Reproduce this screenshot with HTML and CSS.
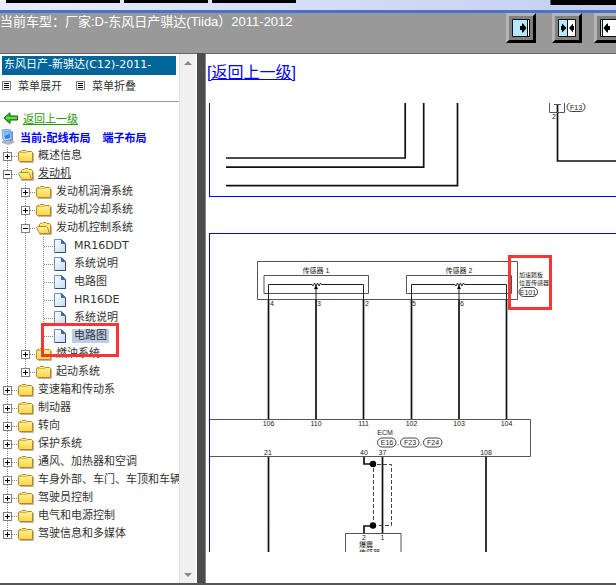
FILE: index.html
```html
<!DOCTYPE html>
<html lang="zh-CN">
<head>
<meta charset="utf-8">
<title>Tiida</title>
<link rel="stylesheet" href="styles.css">
</head>
<body>
<svg class="defs" aria-hidden="true">
  <defs>
    <linearGradient id="fold" x1="0" y1="0" x2="0" y2="1"><stop offset="0" stop-color="#fff79a"/><stop offset="1" stop-color="#ffd24a"/></linearGradient>
    <linearGradient id="page" x1="0" y1="0" x2="1" y2="1"><stop offset="0" stop-color="#fff"/><stop offset="1" stop-color="#c3dcfa"/></linearGradient>
    <symbol id="closed" viewBox="0 0 16 14">
      <path d="M2 13.5H15.5V4" fill="none" stroke="#b8b8b8"/>
      <path d="M.5 11.5V3.500L1.500 2.500H3L4 1.500H8L9 2.500H13.500L14.500 3.500V12.500H1.500Z" fill="url(#fold)" stroke="#b8881c"/>
      <path d="M1 3.500H9" stroke="#dfb54b"/>
    </symbol>
    <symbol id="open" viewBox="0 0 16 14">
      <path d="M3 13.500H15.500V5" fill="none" stroke="#b8b8b8"/>
      <path d="M3.500 10V3.500L4.500 2.500H6L7 1.500H10L11 2.500H13.500L14.500 3.500V12.500H4Z" fill="#ffe680" stroke="#b8881c"/>
      <path d="M.5 6.500L1.500 5.500H10.500L11.500 6.500L13.500 12.500H4L2.500 10.500Z" fill="url(#fold)" stroke="#b8881c"/>
    </symbol>
    <symbol id="doc" viewBox="0 0 16 14">
      <path d="M1.500 .500H8.500L12.500 4.500V13.500H1.500Z" fill="url(#page)" stroke="#6f8fc4"/>
      <path d="M8.500 .500V4.500H12.500Z" fill="#3f68b0" stroke="#3f68b0"/>
      <path d="M12.500 5V13.500H2" fill="none" stroke="#34496f"/>
    </symbol>
    <symbol id="list" viewBox="0 0 9 9">
      <path d="M.5 .5H8.500V8.500H.5Z" fill="#fff" stroke="#777"/>
      <path d="M2 2.500H7M2 4.500H7M2 6.500H7" stroke="#000"/>
    </symbol>
  </defs>
</svg>
<div class="app">
  <div class="strip"><i class="tab wide"></i><i class="tab"></i><i class="tab"></i><i class="tab last"></i></div>
  <header class="head">
    <h1>当前车型：厂家:D-东风日产骐达(Tiida）2011-2012</h1>
    <div class="tools">
      <button class="tool" type="button" aria-label="right"><svg viewBox="0 0 18 18"><path d="M.5 .5H17.500V17.500H.5Z" fill="#fff" stroke="#111"/><path d="M1 1H15V17H1Z" fill="#b5e8fc"/><path d="M15.500 1V17" stroke="#111"/><path d="M8 7H10V4.500H11L14.500 9L11 13.500H10V11H8Z"/></svg></button>
      <button class="tool" type="button" aria-label="both"><svg viewBox="0 0 18 18"><path d="M.5 .5H17.500V17.500H.5Z" fill="#fff" stroke="#111"/><path d="M1 1H9V17H1Z" fill="#b5e8fc"/><path d="M9.500 1V17" stroke="#111"/><path d="M3 7V11H4V13.500L8.500 9L4 4.500V7ZM16 7V11H15V13.500L11 9L15 4.500V7Z"/></svg></button>
      <button class="tool end" type="button" aria-label="left"><svg viewBox="0 0 18 18"><path d="M.5 .5H17.500V17.500H.5Z" fill="#fff" stroke="#111"/><path d="M1 1H3V17H1Z" fill="#b5e8fc"/><path d="M2.500 1V17" stroke="#111"/><path d="M10 7H8V4.500H7L3.500 9L7 13.500H8V11H10Z"/></svg></button>
    </div>
  </header>
  <div class="frames">
    <aside class="side">
      <div class="pane">
        <h2>东风日产-新骐达(C12)-2011-</h2>
        <div class="menu">
          <button type="button"><svg><use href="#list"/></svg>菜单展开</button>
          <button type="button"><svg><use href="#list"/></svg>菜单折叠</button>
        </div>
        <div class="back">
          <svg viewBox="0 0 16 12"><path d="M.8 6L7 .8V4H14.500V8H7V11.500Z" fill="#35c01c" stroke="#0d6408"/><path d="M3 6H14" stroke="#a4f07c"/></svg>
          <a href="#">返回上一级</a>
        </div>
        <div class="now">
          <svg viewBox="0 0 16 16"><path d="M2 12L11 10L14 12V14L8 16L2 14Z" fill="#aeb6c4"/><path d="M10 3L13 2V11L10 13Z" fill="#8793ab"/><path d="M2 1L10 0L12 10L5 12L3 10Z" fill="#c8dcf4" stroke="#6e9ad2"/><path d="M3.500 2.500L9 1.500L10.500 9L5 10Z" fill="#2185ec"/><path d="M4 3L8.500 2L9 5L4.500 7Z" fill="#7cc4ff"/></svg>
          <strong>当前:配线布局</strong><strong>端子布局</strong>
        </div>
        <ul class="tree">
          <li><div class="row"><button class="plus" type="button" aria-label="+"></button><svg><use href="#closed"/></svg><a href="#">概述信息</a></div></li>
          <li><div class="row"><button class="minus" type="button" aria-label="-"></button><svg><use href="#open"/></svg><a href="#" class="under">发动机</a></div>
            <ul>
              <li><div class="row"><button class="plus" type="button" aria-label="+"></button><svg><use href="#closed"/></svg><a href="#">发动机润滑系统</a></div></li>
              <li><div class="row"><button class="plus" type="button" aria-label="+"></button><svg><use href="#closed"/></svg><a href="#">发动机冷却系统</a></div></li>
              <li><div class="row"><button class="minus" type="button" aria-label="-"></button><svg><use href="#open"/></svg><a href="#">发动机控制系统</a></div>
                <ul class="leaves">
                  <li><div class="row leaf"><svg><use href="#doc"/></svg><a href="#">MR16DDT</a></div></li>
                  <li><div class="row leaf"><svg><use href="#doc"/></svg><a href="#">系统说明</a></div></li>
                  <li><div class="row leaf"><svg><use href="#doc"/></svg><a href="#">电路图</a></div></li>
                  <li><div class="row leaf"><svg><use href="#doc"/></svg><a href="#">HR16DE</a></div></li>
                  <li><div class="row leaf"><svg><use href="#doc"/></svg><a href="#">系统说明</a></div></li>
                  <li class="marked"><div class="row leaf"><svg><use href="#doc"/></svg><a href="#" class="chosen">电路图</a></div><i class="mark"></i></li>
                </ul>
              </li>
              <li><div class="row"><button class="plus" type="button" aria-label="+"></button><svg><use href="#closed"/></svg><a href="#">燃油系统</a></div></li>
              <li><div class="row"><button class="plus" type="button" aria-label="+"></button><svg><use href="#closed"/></svg><a href="#">起动系统</a></div></li>
            </ul>
          </li>
          <li><div class="row"><button class="plus" type="button" aria-label="+"></button><svg><use href="#closed"/></svg><a href="#">变速箱和传动系</a></div></li>
          <li><div class="row"><button class="plus" type="button" aria-label="+"></button><svg><use href="#closed"/></svg><a href="#">制动器</a></div></li>
          <li><div class="row"><button class="plus" type="button" aria-label="+"></button><svg><use href="#closed"/></svg><a href="#">转向</a></div></li>
          <li><div class="row"><button class="plus" type="button" aria-label="+"></button><svg><use href="#closed"/></svg><a href="#">保护系统</a></div></li>
          <li><div class="row"><button class="plus" type="button" aria-label="+"></button><svg><use href="#closed"/></svg><a href="#">通风、加热器和空调</a></div></li>
          <li><div class="row"><button class="plus" type="button" aria-label="+"></button><svg><use href="#closed"/></svg><a href="#">车身外部、车门、车顶和车辆</a></div></li>
          <li><div class="row"><button class="plus" type="button" aria-label="+"></button><svg><use href="#closed"/></svg><a href="#">驾驶员控制</a></div></li>
          <li><div class="row"><button class="plus" type="button" aria-label="+"></button><svg><use href="#closed"/></svg><a href="#">电气和电源控制</a></div></li>
          <li><div class="row"><button class="plus" type="button" aria-label="+"></button><svg><use href="#closed"/></svg><a href="#">驾驶信息和多媒体</a></div></li>
        </ul>
      </div>
      <div class="scroll">
        <svg viewBox="0 0 8 4"><path d="M0 4L4 0L8 4Z" fill="#888"/></svg>
        <svg viewBox="0 0 8 4"><path d="M0 0L4 4L8 0Z" fill="#888"/></svg>
      </div>
    </aside>
    <div class="splitter"></div>
    <main class="view">
      <a class="up" href="#">[返回上一级]</a>
      <div class="sheet first">
        <svg class="wires" width="406" height="93" viewBox="210 103 406 93">
          <g fill="none" stroke="#111" stroke-width="1.700">
            <path d="M226 158H405.200V103M226 167.200H423.700V103M226 185.700H457.500V103"/>
            <path d="M557.500 104V161H616"/>
          </g>
          <path d="M549.500 103V112.500H564.500V103M554 104.500H561" fill="none" stroke="#555"/>
          <rect x="567" y="102.500" width="18" height="9" rx="4.500" fill="none" stroke="#444"/>
          <g class="label"><text x="576" y="110">F13</text><text x="554" y="119">2</text></g>
        </svg>
      </div>
      <div class="sheet second">
        <svg class="wires" width="406" height="318" viewBox="210 234 406 318">
          <g fill="none" stroke="#555">
            <path d="M257.500 261.500H517.500V299.500H257.500ZM264 275.500H368.500V293.500H264ZM406.500 275.500H511.500V293.500H406.500Z"/>
            <path d="M210 419.500H530.500V456.500H210M345.500 552V533.500H401V552"/>
          </g>
          <g fill="none" stroke="#222">
            <path d="M268.500 300V284.500H312L313 286L314.500 283L316 286L317.500 283L319 286L320.500 283L321.500 284.500H363.500V300M316 300V288"/>
            <path d="M411.500 300V284.500H455L456 286L457.500 283L459 286L460.500 283L462 286L463.500 283L464.500 284.500H506.500V300M459 300V288"/>
          </g>
          <path d="M316 285L318 289H314ZM459 285L461 289H457Z"/>
          <g fill="none" stroke="#111" stroke-width="1.700">
            <path d="M268.500 300V419M316 300V419M363.500 300V419M411.500 300V419M459 300V419M506.500 300V419"/>
            <path d="M268.500 457V552M486 457V552M382.500 457V533M364 457V464H373M373 526H364V533"/>
          </g>
          <path d="M373.500 468V522M377 464.500H391.500V525.500H377" fill="none" stroke="#444" stroke-dasharray="4 2"/>
          <circle cx="373" cy="464" r="3.200"/><circle cx="373" cy="525.500" r="3.200"/>
          <g fill="none" stroke="#444">
            <rect x="519" y="287.500" width="18.500" height="9" rx="4.500"/>
            <rect x="377.500" y="438" width="18.500" height="9" rx="4.500"/>
            <rect x="400.500" y="438" width="18.500" height="9" rx="4.500"/>
            <rect x="423.500" y="438" width="18.500" height="9" rx="4.500"/>
          </g>
          <g class="label">
            <text x="316" y="273">传感器 1</text><text x="459" y="273">传感器 2</text>
            <text x="272" y="306">4</text><text x="319" y="306">3</text><text x="367" y="306">2</text><text x="414" y="306">5</text><text x="462" y="306">6</text>
            <text x="268.500" y="426">106</text><text x="316" y="426">110</text><text x="363.500" y="426">111</text><text x="411.500" y="426">102</text><text x="459" y="426">103</text><text x="506.500" y="426">104</text>
            <text x="268" y="455">21</text><text x="364" y="455">40</text><text x="382.500" y="455">37</text><text x="486" y="455">108</text>
            <text x="385" y="435">ECM</text>
            <text x="387" y="445">E16</text><text x="398" y="445">,</text><text x="410" y="445">F23</text><text x="421" y="445">,</text><text x="433" y="445">F24</text>
            <text x="528" y="295">E101</text>
            <text x="364" y="540">2</text><text x="382.500" y="540">1</text>
          </g>
          <g class="label left">
            <text class="tight" x="519" y="277">加速踏板</text><text class="tight" x="519" y="285">位置传感器</text>
            <text x="359" y="547">爆震</text><text x="359" y="555">传感器</text>
          </g>
          <rect x="509.500" y="256.500" width="41" height="52" fill="none" stroke="#fb3434" stroke-width="3"/>
        </svg>
      </div>
    </main>
  </div>
</div>
</body>
</html>
```
FILE: styles.css
```css
* { box-sizing: border-box; }
html, body { height: 100%; }
body { margin: 0; background: #fff; font-family: "DejaVu Sans", "Noto Sans CJK SC", sans-serif; font-size: 11px; color: #333; }
h1, h2, ul { margin: 0; padding: 0; font-weight: normal; list-style: none; }
button { margin: 0; padding: 0; border: 0; background: none; font: inherit; color: inherit; }
svg { display: block; flex: none; }
.defs { position: absolute; width: 0; height: 0; }
.app { display: flex; flex-direction: column; height: 100vh; overflow: hidden; }

.strip { display: flex; gap: 4px; flex: none; height: 13px; padding-left: 6px; background: linear-gradient(90deg, #e9edfb, #c3cef0); border-bottom: 3px solid #4a72c8; }
.tab { width: 84px; height: 3px; background: #000; }
.tab.wide { width: 114px; }
.tab.last { width: 66px; height: 5px; margin-left: auto; border-left: 1px solid #666; }

.head { display: flex; justify-content: space-between; flex: none; height: 41px; background: #999; border-bottom: 1px solid #666; overflow: hidden; }
h1 { font: 13px/18px "Liberation Sans", "Noto Sans CJK SC", sans-serif; color: #fff; white-space: nowrap; }
.tools { display: flex; gap: 16px; margin-right: -8px; }
.tool { display: grid; place-items: center; width: 30px; height: 30px; background: #808080; border: 3px solid; border-color: #b4b4b4 #000 #000 #b4b4b4; }
.tool.end { margin-left: -4px; }
.tool svg { width: 18px; height: 18px; }

.frames { display: flex; flex: 1; min-height: 0; border-bottom: 2px solid #555; }
.side { display: flex; flex: none; width: 197px; }
.pane { flex: 1; min-width: 0; padding-top: 2px; overflow: hidden; white-space: nowrap; }
h2 { height: 19px; margin: 0 3px 0 2px; padding-left: 2px; background: #069; color: #fff; font-size: 11px; line-height: 18px; }
.menu { display: flex; gap: 14px; height: 27px; padding: 1px 2px 0; border-bottom: 1px solid #999; }
.menu button { display: flex; align-items: center; gap: 7px; height: 18px; }
.menu svg { width: 9px; height: 9px; }
.back { display: flex; align-items: center; gap: 4px; height: 18px; margin-top: 7px; padding-left: 3px; }
.back svg { width: 16px; height: 12px; }
.back a { color: #290; }
.now { display: flex; align-items: center; height: 18px; margin: 1px 0; color: #00f; }
.now svg { width: 16px; height: 16px; margin-right: 4px; }
.now strong + strong { margin-left: 12px; }

.tree, .tree ul { background: repeating-linear-gradient(#888 0 1px, transparent 1px 2px) 7px 0 / 1px calc(100% - 9px) no-repeat; }
.tree ul { margin-left: 18px; }
.row { display: flex; align-items: center; height: 18px; color: #333; }
.row::before { content: ""; order: 1; flex: none; width: 6px; height: 1px; background: repeating-linear-gradient(90deg, #888 0 1px, transparent 1px 2px); }
.row button { order: 0; flex: none; width: 9px; height: 9px; margin-left: 3px; border: 1px solid #808080; }
.minus { background: linear-gradient(#000, #000) center / 5px 1px no-repeat #fff; }
.plus { background: linear-gradient(#000, #000) center / 5px 1px no-repeat, linear-gradient(#000, #000) center / 1px 5px no-repeat #fff; }
.row svg { order: 2; width: 16px; height: 14px; }
.row a { order: 3; flex: none; margin-left: 2px; padding: 0 2px; color: inherit; line-height: 14px; text-decoration: none; }
.row a.under { text-decoration: underline; }
.row a.chosen { background: #bccde8; }
.row.leaf::before { width: 9px; margin-left: 8px; }
.row.leaf a { margin-left: 3px; }
.marked { position: relative; }
.mark { position: absolute; left: 5px; top: -4px; width: 78px; height: 34px; border: 3px solid #fb3434; }

.scroll { display: flex; flex-direction: column; justify-content: space-between; align-items: center; width: 18px; padding: 7px 0 6px; background: #f0f0f0; border-left: 1px solid #e2e2e2; border-right: 2px solid #fafafa; }
.scroll svg { width: 8px; height: 4px; }
.splitter { flex: none; width: 8px; margin-top: -1px; background: #4d4d4d; }
.view { flex: 1; min-width: 0; padding-left: 1px; border-left: 1px solid #888; overflow: hidden; }
.up { display: block; width: max-content; height: 24px; margin-top: 7px; font: 16px/24px "Liberation Sans", "Noto Sans CJK SC", sans-serif; color: #00f; }
.sheet { margin-left: 2px; border-left: 1px solid #00f; overflow: hidden; }
.first { margin-top: 18px; border-bottom: 1px solid #00f; }
.second { margin-top: 36px; border-top: 1px solid #00f; }
.label { font-family: "Liberation Sans", "Noto Sans CJK SC", sans-serif; font-size: 7px; fill: #222; text-anchor: middle; }
.label.left { text-anchor: start; }
.label .tight { font-size: 6px; }
```
